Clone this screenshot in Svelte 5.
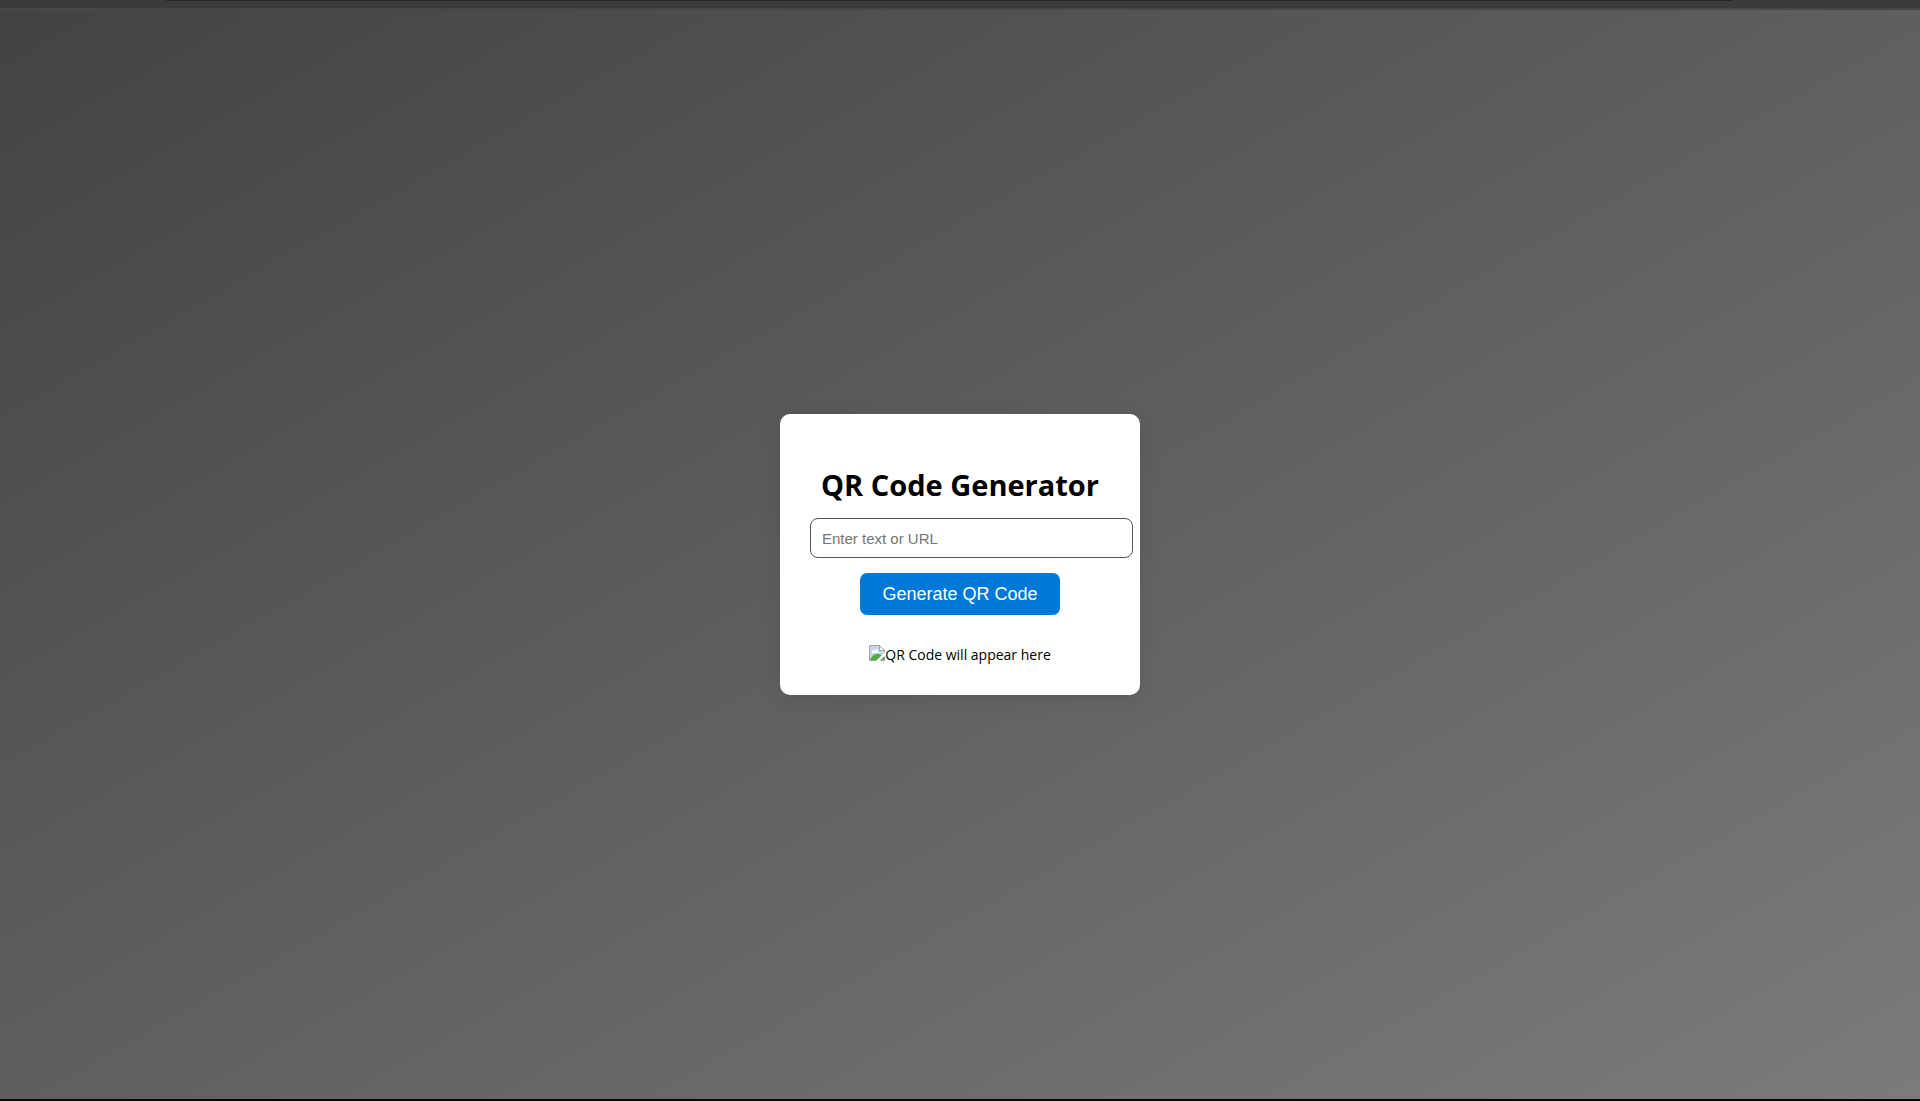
<script>
  let text = $state('');
</script>

<div class="page">
  <div class="toolbar"><div class="tab-edge"></div></div>
  <main>
    <form class="card" onsubmit={(e) => e.preventDefault()}>
      <h1>QR Code Generator</h1>
      <input type="text" placeholder="Enter text or URL" aria-label="Text or URL" bind:value={text} />
      <button type="submit">Generate QR Code</button>
      <div class="result">
        <svg width="16" height="16" viewBox="0 0 16 16" aria-hidden="true">
          <path d="M1 1H10V6H15V15H1Z" fill="#c3d5f8" />
          <path d="M3 7C3 5 5 5 5.500 5.500C6 3.500 9 4 9 6C10 6 10 7.500 9.500 8H3Z" fill="#fff" />
          <path d="M1 15C3 10 7 8 10 9L15 11V15Z" fill="#58a83c" />
          <path d="M.5 15.500V.5H10.500L15.500 5.500V15.500Z" fill="none" stroke="#a3a3a3" />
          <path d="M10.500 .5V5.500H15.500Z" fill="#fff" stroke="#a3a3a3" />
          <path d="M7 16L16 7V10.500L10.500 16Z" fill="#fff" />
        </svg>
        <span>QR Code will appear here</span>
      </div>
    </form>
  </main>
  <div class="bottom-edge"></div>
</div>

<style>
  :global(body) {
    margin: 0;
  }

  .page {
    display: flex;
    flex-direction: column;
    min-height: 100vh;
    font-family: 'Segoe UI', 'Open Sans', 'Noto Sans', sans-serif;
    color: #000;
  }

  .toolbar {
    box-sizing: border-box;
    height: 10px;
    padding: 0 188px 0 166px;
    background: #3b3b3b;
    border-bottom: 2px solid #474747;
  }

  .tab-edge {
    height: 1px;
    background: #272727;
  }

  main {
    flex: 1;
    display: flex;
    align-items: center;
    justify-content: center;
    background: linear-gradient(to bottom right, #434343, #7b7b7b);
  }

  .card {
    box-sizing: border-box;
    display: flex;
    flex-direction: column;
    align-items: center;
    width: 360px;
    padding: 50px 30px 30px;
    background: #fff;
    border-radius: 10px;
    box-shadow: 0 4px 20px rgba(0, 0, 0, 0.1);
  }

  h1 {
    margin: 0 0 12px;
    font-size: 29px;
    line-height: 42px;
    font-weight: 700;
    white-space: nowrap;
  }

  input {
    box-sizing: border-box;
    align-self: flex-start;
    flex-shrink: 0;
    width: 323px;
    height: 40px;
    margin: 0 0 15px;
    padding: 0 11px;
    border: 1px solid #555;
    border-radius: 8px;
    background: #fff;
    font: 15px 'Liberation Sans', Arial, sans-serif;
  }

  input::placeholder {
    color: #757575;
  }

  button {
    height: 42px;
    padding: 0 22px;
    border: 0;
    border-radius: 7px;
    background: #0078d7;
    color: #fff;
    font: 18px 'Liberation Sans', Arial, sans-serif;
    cursor: pointer;
  }

  .result {
    display: flex;
    margin-top: 30px;
    font-size: 14px;
    line-height: 20px;
    white-space: nowrap;
  }

  .bottom-edge {
    height: 2px;
    background: #0a0508;
  }
</style>
